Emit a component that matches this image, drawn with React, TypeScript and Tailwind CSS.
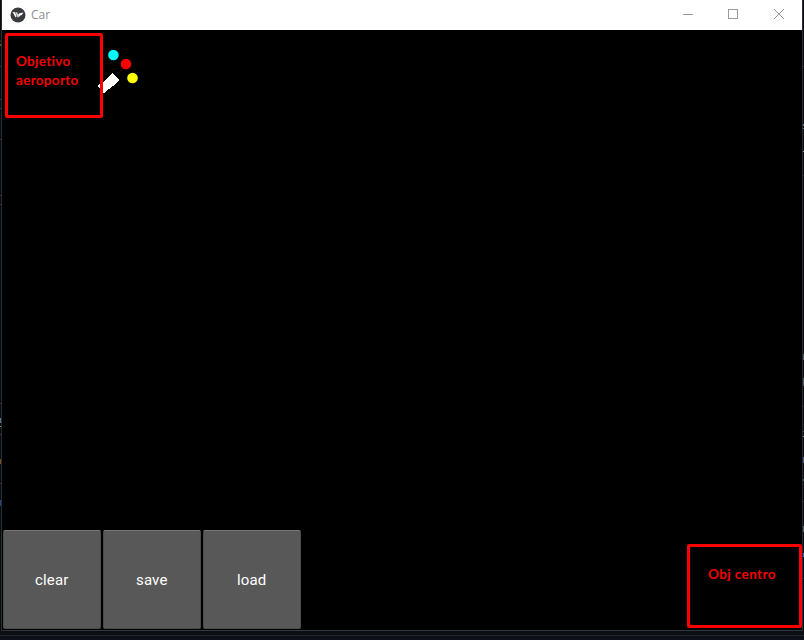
import React from "react";

type Mark = { y: number; h: number; color: string };

const leftMarks: Mark[] = [
  { y: 40, h: 2, color: "#4a1212" },
  { y: 44, h: 2, color: "#8a4a12" },
  { y: 66, h: 1, color: "#2b2f33" },
  { y: 99, h: 1, color: "#3a3e42" },
  { y: 108, h: 1, color: "#3a3e42" },
  { y: 139, h: 1, color: "#3a3e42" },
  { y: 195, h: 1, color: "#3a3e42" },
  { y: 204, h: 1, color: "#3a3e42" },
  { y: 403, h: 1, color: "#3a3e42" },
  { y: 418, h: 5, color: "#4f7f86" },
  { y: 426, h: 1, color: "#7c9a9e" },
  { y: 434, h: 1, color: "#3a3e42" },
  { y: 459, h: 5, color: "#7c4f1c" },
  { y: 483, h: 1, color: "#3a3e42" },
  { y: 500, h: 6, color: "#26478c" },
];

const rightMarks: Mark[] = [
  { y: 66, h: 1, color: "#22262d" },
  { y: 124, h: 2, color: "#66727e" },
  { y: 128, h: 1, color: "#66727e" },
  { y: 151, h: 1, color: "#8d949b" },
  { y: 175, h: 1, color: "#22262d" },
  { y: 354, h: 6, color: "#46525a" },
  { y: 378, h: 8, color: "#46525a" },
  { y: 406, h: 1, color: "#22262d" },
  { y: 431, h: 1, color: "#3c464d" },
  { y: 436, h: 1, color: "#8d949b" },
  { y: 457, h: 6, color: "#43547a" },
  { y: 479, h: 2, color: "#4d5a62" },
  { y: 501, h: 1, color: "#22262d" },
  { y: 526, h: 6, color: "#4d6062" },
  { y: 553, h: 4, color: "#3a62b8" },
  { y: 578, h: 1, color: "#22262d" },
];

function Edge({ marks }: { marks: Mark[] }) {
  return (
    <svg width="1" height="631" shapeRendering="crispEdges" className="block shrink-0">
      <rect width="1" height="631" fill="#080b10" />
      {marks.map((m) => (
        <rect key={m.y} x="0" y={m.y} width="1" height={m.h} fill={m.color} />
      ))}
    </svg>
  );
}

function TitleBar() {
  return (
    <header className="flex h-[30px] shrink-0 items-center bg-white pl-2">
      <svg width="16" height="16" viewBox="0 0 16 16" className="mb-px">
        <circle cx="8" cy="8" r="7.5" fill="#3a3b3d" />
        <path d="M2.6 5 5 5.2 6.6 9.2 5.6 10.6Z" fill="#fff" />
        <path d="M5.4 5 7.2 5.4 8.8 9.4 7.8 10.8Z" fill="#e4e4e4" />
        <path d="M8.2 7.4 9.6 6.2 13.4 5.4 11.8 8 10.2 8.5 8.8 10.2Z" fill="#fff" />
      </svg>
      <h1 className="ml-[5px] flex-1 font-['Open_Sans',sans-serif] text-[12px] leading-[18px] text-[#8d8d8d]">Car</h1>
      <div className="flex h-full text-[#999999]">
        <svg width="137" height="30" viewBox="665 0 137 30" fill="none" stroke="currentColor">
          <path d="M683 14.5h10M728.5 9.5h9v9h-9z" shapeRendering="crispEdges" />
          <path d="m774 9 10 10M784 9l-10 10" />
        </svg>
      </div>
    </header>
  );
}

function PadButton({ label }: { label: string }) {
  return (
    <button className="flex h-[99px] w-[98px] items-center justify-center rounded-[2px] border border-[#4b4b4b] border-t-[#777777] bg-[#585858] pr-[0.5px] font-[Roboto,sans-serif] text-[15px] leading-5 tracking-[0.15px] text-white">
      {label}
    </button>
  );
}

export default function App() {
  return (
    <div className="flex h-[640px] w-[804px] flex-col overflow-hidden bg-[#0c0f16]">
      <div className="flex h-[631px] shrink-0">
        <Edge marks={leftMarks} />
        <div className="w-px bg-[#292d31]" />
        <main className="flex w-[800px] flex-col">
          <TitleBar />
          <section className="relative flex h-[600px] flex-col justify-end bg-black">
            <svg width="50" height="60" viewBox="95 42 50 60" className="absolute left-[93px] top-3">
              <path d="M112 73h1L119 80 118 82 104 93 102 93 101 90 98 87V85L102 83Z" fill="#fff" shapeRendering="crispEdges" />
              <circle cx="113.4" cy="55" r="5.3" fill="#00ffff" />
              <circle cx="126" cy="64" r="5.3" fill="#ff0000" />
              <circle cx="132.5" cy="78" r="5.3" fill="#ffff00" />
            </svg>
            <div className="absolute left-[3px] top-[3px] h-[85px] w-[98px] rounded-[2px] border-[3px] border-[#ff0000] pl-2 pt-[16px] font-[Lato,sans-serif] text-[13.5px] font-bold leading-[19px] tracking-[0.3px] text-[#f40000]">
              <div>Objetivo</div>
              <div>aeroporto</div>
            </div>
            <div className="absolute left-[685px] top-[514px] h-[84px] w-[115px] rounded-[2px] border-[3px] border-[#ff0000] pl-[18px] pt-[18px] font-[Lato,sans-serif] text-[13.5px] font-bold leading-[19px] tracking-[0.4px] text-[#f40000]">
              Obj centro
            </div>
            <div className="flex gap-[2px] pb-px pl-px">
              <PadButton label="clear" />
              <PadButton label="save" />
              <PadButton label="load" />
            </div>
          </section>
          <div className="h-px bg-[#33363a]" />
        </main>
        <div className="w-px bg-[#2b2c35]" />
        <Edge marks={rightMarks} />
      </div>
      <div className="h-1 shrink-0 bg-[#0b0e13]" />
      <div className="h-px shrink-0 bg-[#22262b]" />
      <div className="flex-1 bg-[#0c0e18]" />
    </div>
  );
}
